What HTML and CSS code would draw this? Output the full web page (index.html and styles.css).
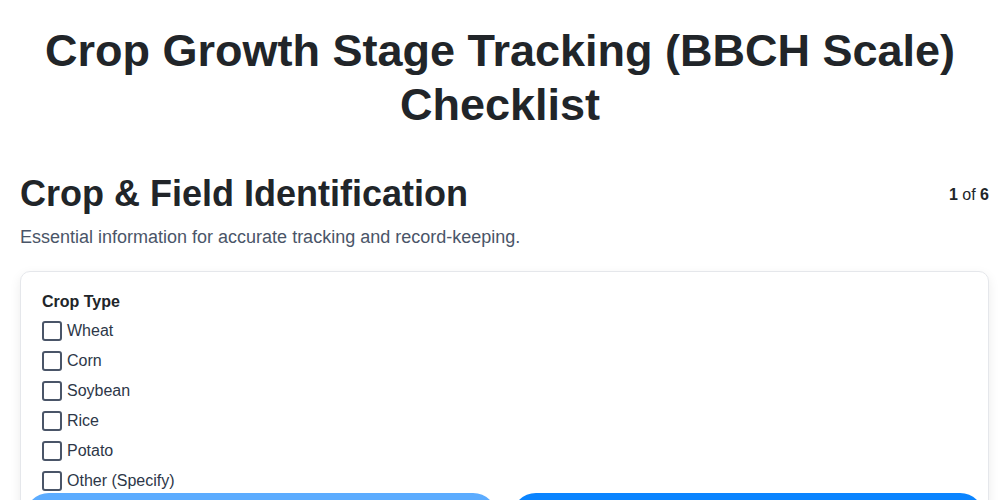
FILE: index.html
```html
<!DOCTYPE html>
<html lang="en">
<head>
    <meta charset="UTF-8">
    <meta name="viewport" content="width=device-width, initial-scale=1.0">
    <title>Crop Growth Stage Tracking (BBCH Scale) Checklist</title>
    <link rel="stylesheet" href="styles.css">
</head>
<body>
    <h1 class="page-title">Crop Growth Stage Tracking (BBCH Scale) Checklist</h1>

    <div class="container">
        <!-- Step header -->
        <div class="step-header">
            <h2>Crop &amp; Field Identification</h2>
            <span class="step-count"><b>1</b> of <b>6</b></span>
        </div>
        <p class="step-desc">Essential information for accurate tracking and record-keeping.</p>

        <div class="card">
            <div class="field-label">Crop Type</div>
            <div class="options">
                <label class="option"><span class="box"></span>Wheat</label>
                <label class="option"><span class="box"></span>Corn</label>
                <label class="option"><span class="box"></span>Soybean</label>
                <label class="option"><span class="box"></span>Rice</label>
                <label class="option"><span class="box"></span>Potato</label>
                <label class="option"><span class="box"></span>Other (Specify)</label>
            </div>

            <div class="nav-row">
                <button class="button prev">Previous</button>
                <button class="button next">Next</button>
            </div>
        </div>
    </div>
</body>
</html>
```

FILE: styles.css
```css
* {
    margin: 0;
    padding: 0;
    box-sizing: border-box;
}

body {
    font-family: 'Liberation Sans', Arial, sans-serif;
    background: #ffffff;
    color: #212529;
    overflow: hidden;
}

.page-title {
    font-size: 45px;
    line-height: 1.2;
    font-weight: 700;
    text-align: center;
    color: #212529;
    padding: 24px 30px 0;
}

.container {
    padding: 0 11px 0 20px;
    margin-top: 40px;
}

.step-header {
    display: flex;
    justify-content: space-between;
    align-items: baseline;
}

.step-header h2 {
    font-size: 36px;
    line-height: 1.2;
    font-weight: 700;
    color: #212529;
}

.step-count {
    font-size: 16px;
    color: #212529;
    position: relative;
    top: -6px;
}

.step-desc {
    font-size: 18px;
    color: #4a5568;
    margin-top: 12px;
}

.card {
    margin-top: 23px;
    border: 1px solid #e5e7eb;
    border-radius: 10px;
    padding: 21px 21px 0;
    box-shadow: 0 4px 12px rgba(0, 0, 0, 0.08);
}

.field-label {
    font-size: 16px;
    font-weight: 700;
    color: #212529;
    line-height: 18px;
    margin-bottom: 5px;
}

.options {
    display: flex;
    flex-direction: column;
}

.option {
    display: flex;
    align-items: center;
    height: 30px;
    font-size: 16px;
    color: #2d3748;
}

.box {
    width: 20px;
    height: 20px;
    border: 2px solid #4a5568;
    border-radius: 3px;
    margin-right: 5px;
    background: #fff;
}

.nav-row {
    display: flex;
    gap: 15px;
    margin: -3px -17px 0;
}

.button {
    flex: 1;
    height: 48px;
    border: none;
    border-radius: 24px;
    color: #fff;
    font-family: inherit;
    font-size: 16px;
    font-weight: 600;
}

.button.prev {
    background: #5cacff;
}

.button.next {
    background: #0a84ff;
}
```
